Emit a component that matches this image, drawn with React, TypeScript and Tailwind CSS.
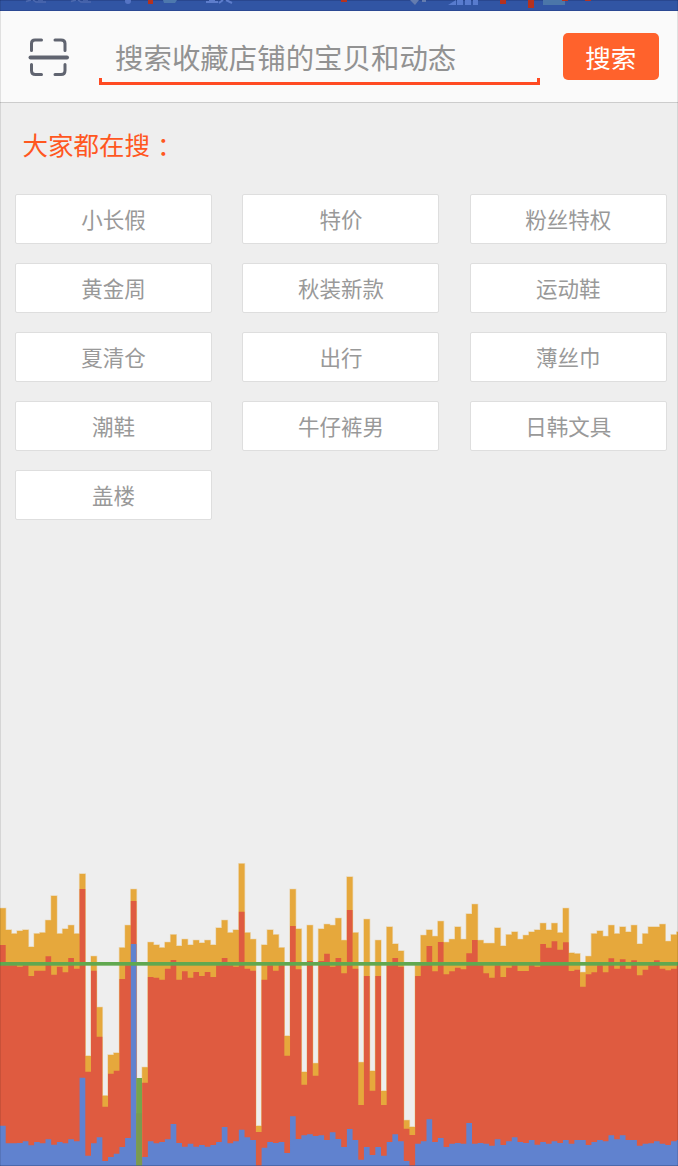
const FONT = "font-['Noto_Sans_CJK_SC','Liberation_Sans',sans-serif]";

const tags = [
  '小长假', '特价', '粉丝特权',
  '黄金周', '秋装新款', '运动鞋',
  '夏清仓', '出行', '薄丝巾',
  '潮鞋', '牛仔裤男', '日韩文具',
  '盖楼',
];

// Each sample: top of the orange, red and blue layers, in thirds of a pixel.
const samples: [number, number, number][] = [
  [175, 285, 827], [240, 346, 880], [251, 346, 880], [243, 350, 879], [240, 346, 874],
  [291, 378, 886], [251, 362, 876], [248, 362, 880], [211, 319, 868], [138, 374, 884],
  [251, 350, 876], [237, 367, 880], [226, 324, 868], [251, 356, 874], [72, 117, 683],
  [618, 665, 917], [319, 362, 880], [472, 560, 862], [737, 770, 933], [615, 671, 921],
  [609, 662, 911], [293, 387, 891], [226, 346, 864], [118, 153, 282], [948, 948, 948],
  [652, 698, 921], [277, 381, 874], [285, 383, 880], [293, 389, 876], [277, 356, 868],
  [254, 330, 822], [288, 389, 879], [268, 364, 890], [285, 383, 881], [271, 366, 890],
  [279, 378, 885], [271, 366, 890], [285, 381, 885], [234, 346, 876], [211, 324, 831],
  [248, 346, 880], [240, 350, 874], [41, 185, 839], [248, 356, 862], [268, 362, 870],
  [828, 846, 948], [285, 389, 893], [240, 346, 876], [254, 362, 879], [293, 346, 876],
  [558, 617, 909], [118, 228, 799], [237, 358, 867], [666, 704, 856], [226, 333, 853],
  [640, 677, 858], [237, 333, 856], [223, 311, 870], [226, 350, 847], [205, 324, 867],
  [271, 370, 891], [81, 180, 837], [248, 356, 870], [637, 765, 929], [208, 378, 891],
  [663, 722, 915], [271, 378, 891], [723, 765, 917], [231, 346, 876], [282, 324, 853],
  [303, 350, 874], [811, 836, 933], [831, 855, 948], [346, 378, 881], [256, 346, 874],
  [240, 288, 808], [259, 364, 876], [214, 276, 864], [277, 373, 891], [268, 364, 881],
  [231, 353, 879], [268, 358, 881], [192, 310, 819], [163, 270, 881], [271, 346, 879],
  [280, 370, 881], [280, 383, 887], [234, 346, 868], [288, 381, 885], [254, 353, 874],
  [246, 346, 862], [268, 363, 876], [256, 363, 879], [246, 346, 870], [240, 350, 884],
  [220, 282, 876], [240, 293, 881], [220, 274, 874], [248, 299, 879], [175, 277, 870],
  [309, 363, 881], [311, 359, 870], [367, 410, 870], [319, 373, 885], [251, 367, 876],
  [243, 346, 870], [259, 367, 874], [226, 325, 856], [251, 356, 868], [231, 328, 856],
  [246, 356, 870], [226, 331, 870], [282, 376, 887], [251, 359, 881], [231, 346, 880],
  [231, 331, 874], [223, 356, 881], [274, 361, 885], [254, 356, 874], [246, 346, 870],
];

const STEP = 17.06;

function layer(index: 0 | 1 | 2) {
  const steps = samples
    .map((s, i) => `V${s[index]}H${((i + 1) * STEP).toFixed(1)}`)
    .join('');
  return `M0 948${steps}V948Z`;
}

function GpuChart() {
  return (
    <svg className="mt-auto block h-[316px] w-full shrink-0" viewBox="0 0 2034 948" preserveAspectRatio="none">
      <path d={layer(0)} fill="#e6a83c" stroke="#e6a83c" strokeOpacity=".35" strokeWidth="4" />
      <path d={layer(1)} fill="#df5b40" />
      <path d={layer(2)} fill="#6082cf" />
      <rect x="409" y="684" width="17" height="264" fill="#75a64b" />
      <rect x="409" y="790" width="17" height="158" fill="#7a9a4f" />
      <rect x="0" y="336" width="2034" height="11" fill="#60a84f" />
      <rect x="0" y="945" width="2034" height="3" fill="#3d568e" fillOpacity=".55" />
    </svg>
  );
}

function StatusBar() {
  return (
    <svg className="block h-[11px] w-full shrink-0 bg-[#3155a4]" viewBox="0 0 678 11">
      <rect width="678" height="1" fill="#29478f" />
      <rect y="10" width="678" height="1" fill="#2b4893" />
      <g fill="none" stroke="#4c68ae" strokeWidth="1.5">
        <path d="M26 1.500l5-1.500M33 0l3 2h10M38 0h5M71 1.500l5-1.500M78 0l3 2h10M83 0h5" />
      </g>
      <circle cx="128" cy="1" r="3" fill="#5574c4" />
      <path d="M163 0h14l-2 3h-11z" fill="#4d78ad" />
      <path d="M206 2h12M209 0h6M219 3l4-3M226 0l6 3" stroke="#5d7dcc" strokeWidth="2" />
      <path d="M410 0h9l-4 5zM422 0h4v2h-4z" fill="#647caf" />
      <path d="M448 5l8-5v5zM457 0h6v5h-6zM465 0h6v5h-6zM473 0h5v5h-5z" fill="#587bce" />
      <path d="M543 0h22v5h-22z" fill="#4b76a9" />
      <path d="M148 0h5v4h-5zM341 0h6v2h-6zM500 0h6v4h-6zM528 0h6v8h-6zM562 0h6v1h-6zM585 0h6v1h-6z" fill="#b4321f" />
    </svg>
  );
}

function ScanIcon() {
  return (
    <svg className="h-[42px] w-[42px]" viewBox="0 0 42 42" fill="none" stroke="#606470" strokeLinecap="round">
      <path
        strokeWidth="3"
        d="M3.500 13.500V6.500q0-3.500 3.500-3.500h6.500M27 3h6q4 0 4 3.500v7M3.500 27.500v6q0 4 4 4h6M27 37.500h6q4 0 4-4v-6"
      />
      <path strokeWidth="4" d="M2.500 20.500h36.500" />
    </svg>
  );
}

export default function App() {
  return (
    <div className={`relative flex h-[1166px] w-[678px] flex-col overflow-hidden bg-[#eeeeee] ${FONT}`}>
      <StatusBar />
      <header className="flex h-[92px] shrink-0 items-start border-b border-[#cccccc] bg-[#fafafa] pl-[28px] pt-[22px]">
        <div className="mt-[3.500px] shrink-0">
          <ScanIcon />
        </div>
        <div className="ml-[28.500px] flex w-[441.500px] shrink-0 flex-col">
          <div className="h-[45px] pl-[16.500px] text-[28.450px] leading-[47px] whitespace-nowrap text-[#929292]">
            搜索收藏店铺的宝贝和动态
          </div>
          <div className="h-[7px] border-x-[3px] border-b-[3px] border-[#ff4a22]" />
        </div>
        <button className="ml-[22.500px] h-[47px] w-[96.500px] rounded-[5px] bg-[#ff622c] text-[25.500px] leading-[48px] text-white">
          搜索
        </button>
      </header>
      <h2 className="mt-[22px] h-[38px] shrink-0 pl-[22.500px] text-[25.500px] leading-[38px] whitespace-pre text-[#ff571f]">
        大家都在搜<span className="ml-[7px]">：</span>
      </h2>
      <div className="mt-[31px] grid shrink-0 grid-cols-[197px_197px_197px] gap-x-[30.400px] gap-y-[19.100px] pl-[15px]">
        {tags.map((tag) => (
          <div
            key={tag}
            className="h-[50px] rounded-[2px] border border-[#dedede] bg-white text-center text-[21.500px] leading-[48px] text-[#999999]"
          >
            {tag}
          </div>
        ))}
      </div>
      <GpuChart />
      <div className="pointer-events-none absolute inset-0 border-x border-black/10" />
    </div>
  );
}
